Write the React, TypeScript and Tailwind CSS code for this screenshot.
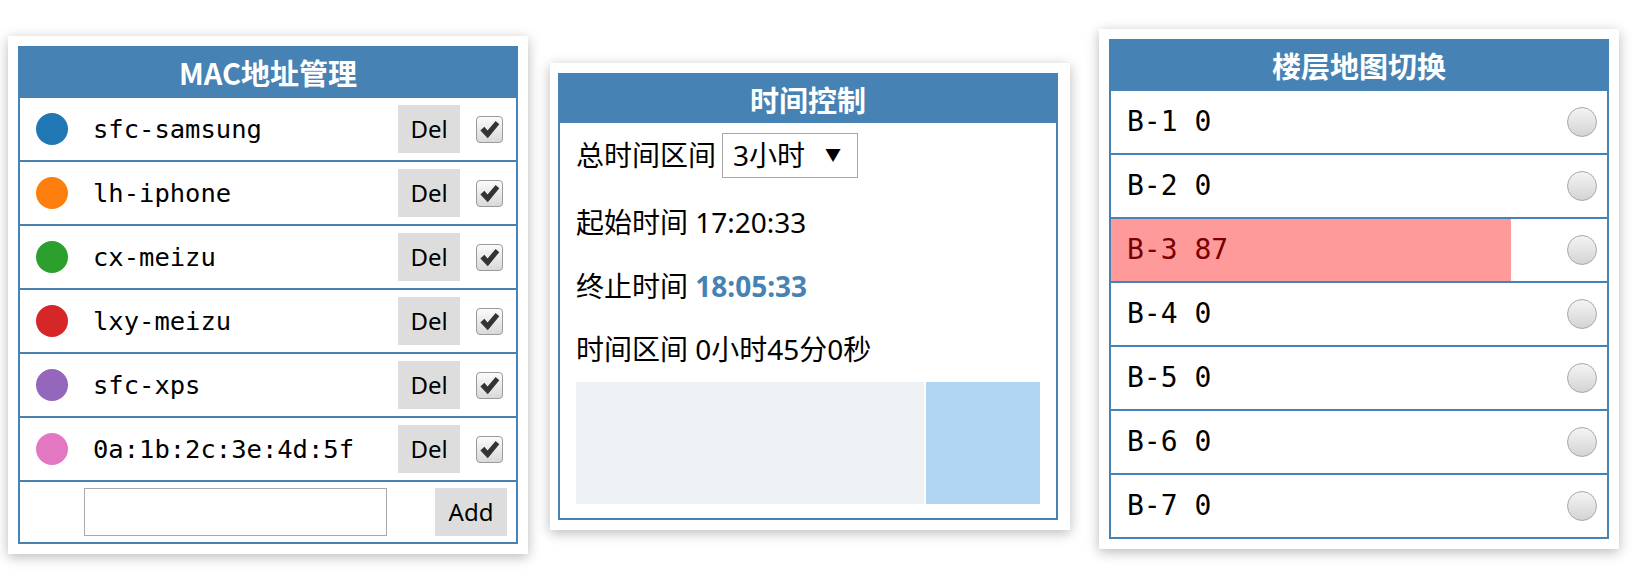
import React from "react";

const macs = [
  { name: "sfc-samsung", color: "bg-[#1f77b4]" },
  { name: "lh-iphone", color: "bg-[#ff7f0e]" },
  { name: "cx-meizu", color: "bg-[#2ca02c]" },
  { name: "lxy-meizu", color: "bg-[#d62728]" },
  { name: "sfc-xps", color: "bg-[#9467bd]" },
  { name: "0a:1b:2c:3e:4d:5f", color: "bg-[#e377c2]" },
];

const floors = [
  { name: "B-1", count: 0 },
  { name: "B-2", count: 0 },
  { name: "B-3", count: 87 },
  { name: "B-4", count: 0 },
  { name: "B-5", count: 0 },
  { name: "B-6", count: 0 },
  { name: "B-7", count: 0 },
];

const ui = { fontFamily: '"Noto Sans", "Noto Sans CJK SC", sans-serif' };
const head = { fontFamily: '"Noto Sans CJK SC", "Noto Sans", sans-serif' };
const mono = { fontFamily: '"DejaVu Sans Mono", "Liberation Mono", monospace' };

function Card({ className, title, children }: { className: string; title: string; children: React.ReactNode }) {
  return (
    <div className={"bg-white p-[10px] shadow-[0_3px_12px_rgba(0,0,0,0.28)] " + className}>
      <div className="w-[500px] border-2 border-[#4682b4]">
        <div
          className="h-[48px] bg-[#4682b4] text-white text-[29px] font-bold flex items-center justify-center leading-none"
          style={head}
        >
          {title}
        </div>
        {children}
      </div>
    </div>
  );
}

function CheckBox() {
  return (
    <div className="w-[27px] h-[27px] rounded-[4px] border border-[#9a9a9a] bg-gradient-to-b from-[#fbfbfb] to-[#d9d9d9] flex items-center justify-center">
      <svg width="23" height="23" viewBox="0 0 24 24">
        <path d="M2.5 13 L6.6 9.2 L10 13 L18.4 3 L22.2 6.4 L10.2 21 Z" fill="#333333" />
      </svg>
    </div>
  );
}

function Radio() {
  return (
    <div className="w-[30px] h-[30px] rounded-full border border-[#a8a8a8] bg-gradient-to-b from-[#f4f4f4] to-[#d4d4d4]" />
  );
}

function MacPanel() {
  return (
    <Card className="ml-[8px] mt-[36px]" title="MAC地址管理">
      {macs.map((m) => (
        <div key={m.name} className="h-[64px] border-t-2 border-[#4682b4] flex items-center">
          <div className={"ml-[16px] w-[32px] h-[32px] rounded-full " + m.color} />
          <div className="ml-[25px] flex-1 text-[25.5px] text-black" style={mono}>
            {m.name}
          </div>
          <div
            className="w-[62px] h-[48px] bg-[#dddddd] flex items-center justify-center text-[24px] text-black"
            style={ui}
          >
            Del
          </div>
          <div className="ml-[16px] mr-[13px]">
            <CheckBox />
          </div>
        </div>
      ))}
      <div className="h-[62px] border-t-2 border-[#4682b4] flex items-center">
        <div className="ml-[64px] w-[303px] h-[48px] border border-[#a9a9a9] bg-white" />
        <div className="flex-1" />
        <div
          className="mr-[9px] w-[72px] h-[48px] bg-[#dddddd] flex items-center justify-center text-[24px] text-black"
          style={ui}
        >
          Add
        </div>
      </div>
    </Card>
  );
}

function TimePanel() {
  return (
    <Card className="ml-[22px] mt-[63px] pl-[8px] pr-[12px]" title="时间控制">
      <div className="pl-[16px] pr-[16px] pb-[14px] text-[28px] text-black" style={ui}>
        <div className="h-[64px] flex items-center">
          <span>总时间区间</span>
          <div className="ml-[6px] w-[136px] h-[45px] border border-[#a9a9a9] flex items-center justify-between pl-[10px] pr-[16px]">
            <span>3小时</span>
            <span className="text-[16px]">▼</span>
          </div>
        </div>
        <div className="h-[70px] flex items-center">起始时间 17:20:33</div>
        <div className="h-[58px] flex items-center">
          终止时间&nbsp;<span className="font-bold text-[#4682b4]">18:05:33</span>
        </div>
        <div className="h-[67px] flex items-center">时间区间 0小时45分0秒</div>
        <div className="h-[122px] flex">
          <div className="flex-1 bg-[#edf1f4]" />
          <div className="w-[2px]" />
          <div className="w-[114px] bg-[#b0d5f2]" />
        </div>
      </div>
    </Card>
  );
}

function FloorPanel() {
  return (
    <Card className="ml-[29px] mt-[29px]" title="楼层地图切换">
      {floors.map((f) => (
        <div key={f.name} className="relative h-[64px] border-t-2 border-[#4682b4] flex items-center">
          {f.count > 0 && <div className="absolute left-0 top-0 bottom-0 w-[400px] bg-[#ff9a9a]" />}
          <div
            className={"relative ml-[16px] flex-1 text-[28px] " + (f.count > 0 ? "text-[#7a0000]" : "text-black")}
            style={mono}
          >
            {f.name} {f.count}
          </div>
          <div className="relative mr-[10px]">
            <Radio />
          </div>
        </div>
      ))}
    </Card>
  );
}

export default function App() {
  return (
    <div className="w-[1634px] h-[579px] bg-white flex items-start overflow-hidden">
      <MacPanel />
      <TimePanel />
      <FloorPanel />
    </div>
  );
}
